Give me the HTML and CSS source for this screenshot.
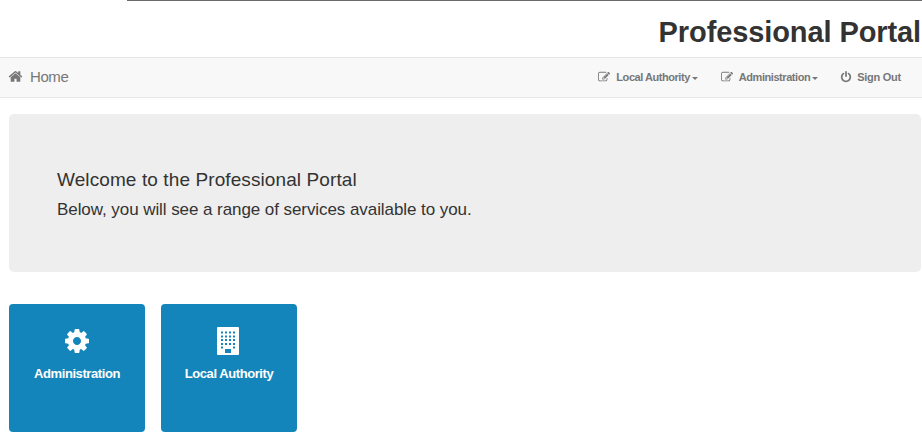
FILE: index.html
```html
<!DOCTYPE html>
<html lang="en">
<head>
    <meta charset="UTF-8">
    <meta name="viewport" content="width=device-width, initial-scale=1.0">
    <title>Professional Portal</title>
    <link rel="stylesheet" href="styles.css">
</head>
<body>
    <header class="header">
        <h1>Professional Portal</h1>
    </header>

    <nav class="navbar">
        <a class="brand" href="#">
            <svg class="icon" viewBox="0 0 1792 1792"><path d="M1472 992v480q0 26-19 45t-45 19h-384v-384h-256v384h-384q-26 0-45-19t-19-45v-480q0-1 .5-3t.5-3l575-474 575 474q1 2 1 6zm223-69l-62 74q-8 9-21 11h-3q-13 0-21-7l-692-577-692 577q-12 8-24 7-13-2-21-11l-62-74q-8-10-7-23.5t11-21.5l719-599q32-26 76-26t76 26l244 204v-195q0-14 9-23t23-9h192q14 0 23 9t9 23v408l219 182q10 8 11 21.5t-7 23.5z"/></svg>
            <span>Home</span>
        </a>
        <ul class="menu">
            <li><a href="#">
                <svg class="icon" viewBox="0 0 1792 1792"><path d="M888 1184l116-116-152-152-116 116v56h96v96h56zm440-720q-16-16-33 1l-350 350q-17 17-1 33t33-1l350-350q17-17 1-33zm80 594v190q0 119-84.5 203.5t-203.5 84.5h-832q-119 0-203.5-84.5t-84.5-203.5v-832q0-119 84.5-203.5t203.5-84.5h832q63 0 117 25 15 7 18 23 3 17-9 29l-49 49q-14 14-32 8-23-6-45-6h-832q-66 0-113 47t-47 113v832q0 66 47 113t113 47h832q66 0 113-47t47-113v-126q0-13 9-22l64-64q15-15 35-7t20 29zm-96-738l288 288-672 672h-288v-288zm444 132l-92 92-288-288 92-92q28-28 68-28t68 28l152 152q28 28 28 68t-28 68z"/></svg>
                <span>Local Authority</span><b class="caret"></b>
            </a></li>
            <li><a href="#">
                <svg class="icon" viewBox="0 0 1792 1792"><path d="M888 1184l116-116-152-152-116 116v56h96v96h56zm440-720q-16-16-33 1l-350 350q-17 17-1 33t33-1l350-350q17-17 1-33zm80 594v190q0 119-84.5 203.5t-203.5 84.5h-832q-119 0-203.5-84.5t-84.5-203.5v-832q0-119 84.5-203.5t203.5-84.5h832q63 0 117 25 15 7 18 23 3 17-9 29l-49 49q-14 14-32 8-23-6-45-6h-832q-66 0-113 47t-47 113v832q0 66 47 113t113 47h832q66 0 113-47t47-113v-126q0-13 9-22l64-64q15-15 35-7t20 29zm-96-738l288 288-672 672h-288v-288zm444 132l-92 92-288-288 92-92q28-28 68-28t68 28l152 152q28 28 28 68t-28 68z"/></svg>
                <span>Administration</span><b class="caret"></b>
            </a></li>
            <li><a class="sign-out" href="#">
                <svg class="icon" viewBox="0 0 1792 1792"><path d="M1664 896q0 156-61 298t-164 245-245 164-298 61-298-61-245-164-164-245-61-298q0-182 80.5-343t226.5-270q43-32 95.5-25t83.5 50q32 42 24.5 94.5t-49.5 84.5q-98 74-151.5 181t-53.5 228q0 104 40.5 198.5t109.5 163.5 163.5 109.5 198.5 40.5 198.5-40.5 163.5-109.5 109.5-163.5 40.5-198.5q0-121-53.5-228t-151.5-181q-42-32-49.5-84.5t24.5-94.5q31-43 84-50t95 25q146 109 226.5 270t80.5 343zm-640-768v640q0 52-38 90t-90 38-90-38-38-90v-640q0-52 38-90t90-38 90 38 38 90z"/></svg>
                <span>Sign Out</span>
            </a></li>
        </ul>
    </nav>

    <main class="content">
        <div class="jumbotron">
            <h2>Welcome to the Professional Portal</h2>
            <p>Below, you will see a range of services available to you.</p>
        </div>

        <div class="tiles">
            <a class="tile" href="#">
                <svg class="tile-icon" viewBox="0 0 1792 1792"><path d="M1152 896q0-106-75-181t-181-75-181 75-75 181 75 181 181 75 181-75 75-181zm512-109v222q0 12-8 23t-20 13l-185 28q-19 54-39 91 35 50 107 138 10 12 10 25t-9 23q-27 37-99 108t-94 71q-12 0-26-9l-138-108q-44 23-91 38-16 136-29 186-7 28-36 28h-222q-14 0-24.5-8.5t-11.5-21.5l-28-184q-49-16-90-37l-141 107q-10 9-25 9-14 0-25-11-126-114-165-168-7-10-7-23 0-12 8-23 15-21 51-66.5t54-70.5q-27-50-41-99l-183-27q-13-2-21-12.5t-8-23.5v-222q0-12 8-23t19-13l186-28q14-46 39-92-40-57-107-138-10-12-10-24 0-10 9-23 26-36 98.5-107.5t94.5-71.5q13 0 26 10l138 107q44-23 91-38 16-136 29-186 7-28 36-28h222q14 0 24.5 8.5t11.5 21.5l28 184q49 16 90 37l142-107q9-9 24-9 13 0 25 10 129 119 165 170 7 8 7 22 0 12-8 23-15 21-51 66.5t-54 70.5q26 50 41 98l183 28q13 2 21 12.5t8 23.5z"/></svg>
                <span>Administration</span>
            </a>
            <a class="tile" href="#">
                <svg class="tile-icon" viewBox="0 0 28 28">
                    <rect x="2" y="0" width="22" height="28" rx="1"/>
                    <g class="windows">
                        <path d="M6 5.5h14M6 9.5h14M6 13h14M6 17h14"/>
                        <path d="M6 20.5h2M18 20.5h2"/>
                        <path class="door" d="M10 24h6"/>
                    </g>
                </svg>
                <span>Local Authority</span>
            </a>
        </div>
    </main>
</body>
</html>
```
FILE: styles.css
```css
* {
    box-sizing: border-box;
}
body {
    font-family: "Liberation Sans", Arial, sans-serif;
    background: #fff;
    color: #333;
    margin: 0;
}
a {
    color: inherit;
    text-decoration: none;
}
.header {
    height: 57px;
    margin-left: 127px;
    padding: 15px 1px 0 0;
    border-top: 1px solid #6b6b6b;
    text-align: right;
}
.header h1 {
    margin: 0;
    font-size: 29px;
    line-height: 33px;
    letter-spacing: -0.1px;
}
.navbar {
    display: flex;
    align-items: center;
    justify-content: space-between;
    height: 41px;
    padding: 0 21px 2px 8px;
    background: #f8f8f8;
    border-top: 1px solid #e7e7e7;
    border-bottom: 1px solid #e7e7e7;
    color: #777;
}
.icon {
    fill: currentColor;
    width: 12px;
    height: 12px;
}
.brand {
    display: flex;
    align-items: center;
    gap: 7px;
    font-size: 15px;
    letter-spacing: -0.4px;
}
.brand .icon {
    width: 15px;
    height: 15px;
}
.menu {
    display: flex;
    gap: 23px;
    margin: 0;
    padding: 0;
    list-style: none;
    font-size: 11px;
    font-weight: bold;
    letter-spacing: -0.45px;
}
.menu a {
    display: flex;
    align-items: center;
}
.menu .icon {
    margin: 1px 6px 0 0;
}
.menu .sign-out {
    letter-spacing: -0.25px;
}
.caret {
    margin: 3px 0 0 2px;
    border-top: 3px solid;
    border-left: 3px solid transparent;
    border-right: 3px solid transparent;
}
.menu .sign-out .icon {
    margin-left: -1px;
    margin-right: 5px;
}
.content {
    padding: 16px 1px 0 9px;
}
.jumbotron {
    height: 158px;
    padding: 55px 48px 0;
    border-radius: 5px;
    background: #eee;
}
.jumbotron h2 {
    margin: 0 0 9px;
    font-size: 19px;
    font-weight: normal;
    line-height: 22px;
    letter-spacing: 0.1px;
}
.jumbotron p {
    margin: 0;
    font-size: 17px;
    line-height: 20px;
    letter-spacing: -0.07px;
}
.tiles {
    display: flex;
    gap: 16px;
    margin-top: 32px;
}
.tile {
    display: flex;
    flex-direction: column;
    align-items: center;
    gap: 11px;
    width: 136px;
    height: 128px;
    padding-top: 23px;
    border-radius: 4px;
    background: #1385ba;
    color: #fff;
    font-size: 13px;
    font-weight: bold;
    letter-spacing: -0.42px;
}
.tile-icon {
    width: 28px;
    height: 28px;
    fill: currentColor;
}
.windows {
    fill: none;
    stroke: #1385ba;
    stroke-width: 2;
    stroke-dasharray: 2 2;
}
.windows .door {
    stroke-width: 4;
    stroke-dasharray: none;
}
```
